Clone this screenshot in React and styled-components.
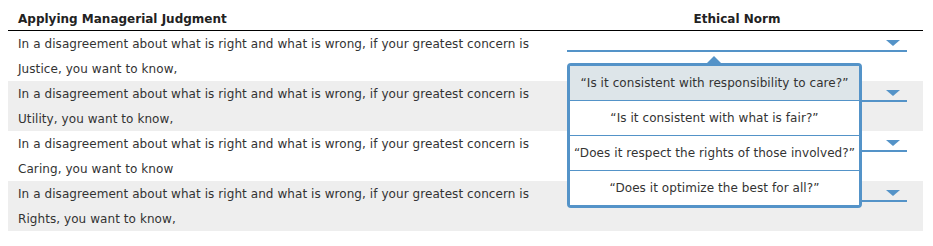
import styled, { createGlobalStyle } from "styled-components";

const GlobalStyle = createGlobalStyle`
  body {
    margin: 8px;
    background: #ffffff;
    font-family: "DejaVu Sans", Verdana, sans-serif;
    font-size: 12px;
    letter-spacing: 0.07px;
    color: #333333;
  }
`;

const BLUE = "#5493c8";

const Table = styled.div`
  width: 915px;
`;

const HeaderRow = styled.div`
  display: grid;
  grid-template-columns: 559px 356px;
  height: 22px;
  border-bottom: 1px solid #000000;
  font-weight: bold;
  letter-spacing: 0;
  color: #222222;
`;

const HeadCell = styled.div`
  display: flex;
  align-items: center;
  padding-left: ${(p) => (p.$center ? "0" : "10px")};
  padding-right: ${(p) => (p.$center ? "16px" : "0")};
  justify-content: ${(p) => (p.$center ? "center" : "flex-start")};
`;

const Row = styled.div`
  display: grid;
  grid-template-columns: 559px 356px;
  height: 50px;
  background: ${(p) => (p.$shaded ? "#eeeeee" : "#ffffff")};
`;

const Prompt = styled.div`
  padding: 1px 0 0 10px;
  line-height: 25px;
  color: #333333;
  white-space: nowrap;
`;

const SelectCell = styled.div`
  position: relative;
  padding-right: 16px;
`;

const Select = styled.div`
  position: relative;
  height: 19px;
  border-bottom: 2px solid ${BLUE};
`;

const Arrow = styled.span`
  position: absolute;
  right: 7px;
  top: 9px;
  width: 0;
  height: 0;
  border-left: 7px solid transparent;
  border-right: 7px solid transparent;
  border-top: 6px solid ${BLUE};
`;

const Popup = styled.div`
  position: absolute;
  left: 0;
  top: 32px;
  width: 295px;
  box-sizing: border-box;
  border: 3px solid ${BLUE};
  border-radius: 4px;
  background: #ffffff;
  z-index: 5;

  &::before {
    content: "";
    position: absolute;
    top: -10px;
    left: 137px;
    border-left: 7px solid transparent;
    border-right: 7px solid transparent;
    border-bottom: 7px solid ${BLUE};
  }
`;

const Option = styled.div`
  height: 34px;
  display: flex;
  align-items: center;
  justify-content: center;
  background: ${(p) => (p.$active ? "#dde5e9" : "#ffffff")};
  border-top: ${(p) => (p.$first ? "none" : `1px solid ${BLUE}`)};
  color: #333333;
  white-space: nowrap;
`;

const rows = [
  "Justice, you want to know,",
  "Utility, you want to know,",
  "Caring, you want to know",
  "Rights, you want to know,",
];

const options = [
  "\u201cIs it consistent with responsibility to care?\u201d",
  "\u201cIs it consistent with what is fair?\u201d",
  "\u201cDoes it respect the rights of those involved?\u201d",
  "\u201cDoes it optimize the best for all?\u201d",
];

const App = () => {
  return (
    <>
      <GlobalStyle />
      <Table>
        <HeaderRow>
          <HeadCell>Applying Managerial Judgment</HeadCell>
          <HeadCell $center>Ethical Norm</HeadCell>
        </HeaderRow>
        {rows.map((r, i) => (
          <Row key={r} $shaded={i % 2 === 1}>
            <Prompt>
              In a disagreement about what is right and what is wrong, if your greatest concern is
              <br />
              {r}
            </Prompt>
            <SelectCell>
              <Select>
                <Arrow />
              </Select>
              {i === 0 && (
                <Popup>
                  {options.map((o, j) => (
                    <Option key={o} $first={j === 0} $active={j === 0}>
                      {o}
                    </Option>
                  ))}
                </Popup>
              )}
            </SelectCell>
          </Row>
        ))}
      </Table>
    </>
  );
};

export default App;
